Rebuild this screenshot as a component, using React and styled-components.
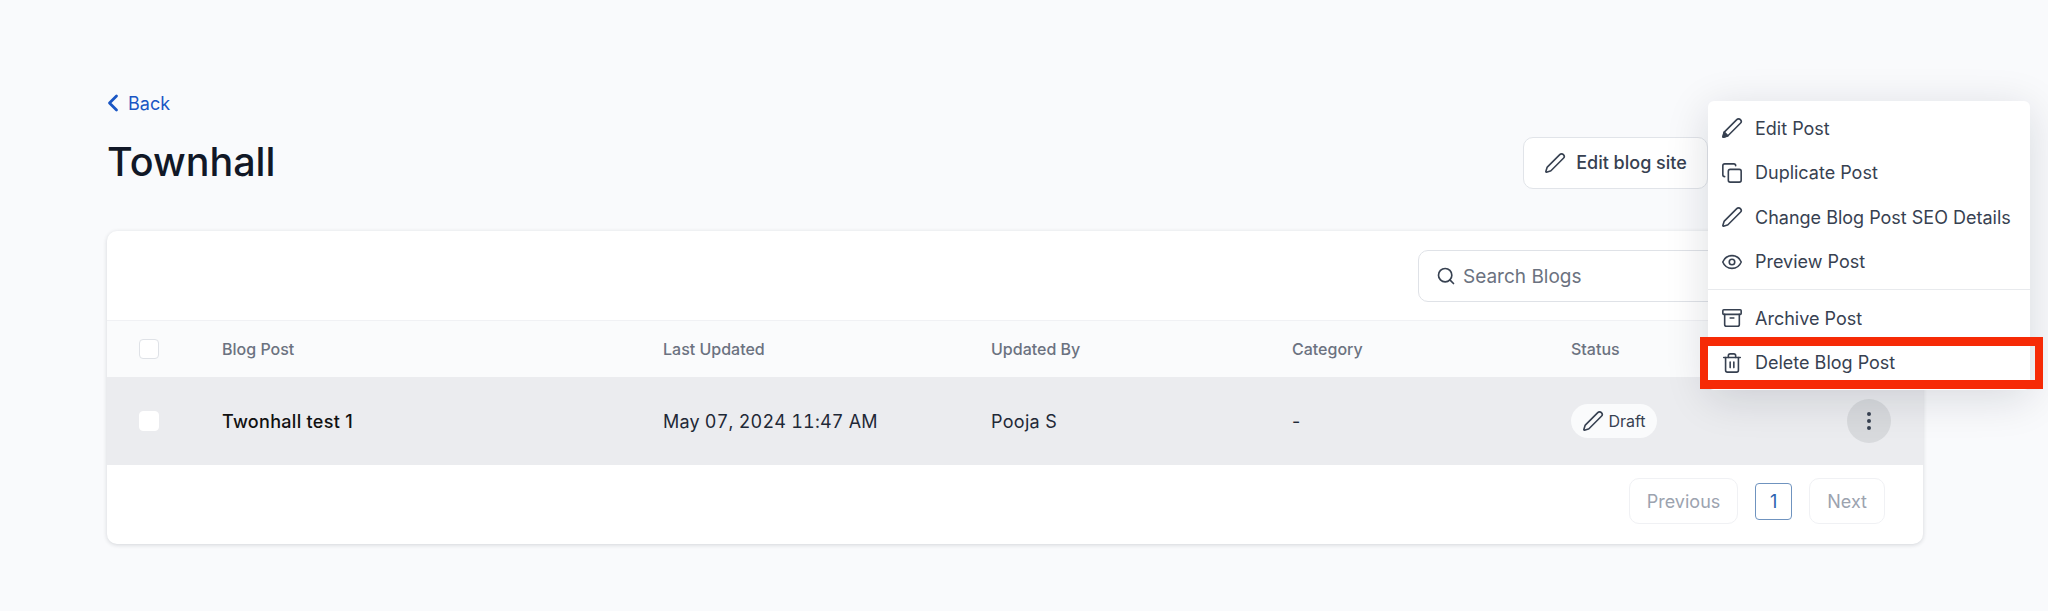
import React from 'react';
import styled, { createGlobalStyle } from 'styled-components';
import { ChevronLeft, Pen, Copy, Eye, Archive, Trash2, Search, EllipsisVertical } from 'lucide-react';

const GlobalStyle = createGlobalStyle`
  html, body {
    margin: 0;
    background: #f9fafc;
    font-family: Inter, "Liberation Sans", sans-serif;
    overflow: hidden;
  }
`;

const Page = styled.div`
  position: relative;
  box-sizing: border-box;
  width: 2048px;
  height: 611px;
  padding: 90px 125px 0 107px;
  background: #f9fafc;
`;

const BackLink = styled.a`
  display: flex;
  align-items: center;
  gap: 1px;
  height: 26px;
  margin-left: -8px;
  font-size: 18px;
  color: #1a56c4;
`;

const HeaderRow = styled.div`
  display: flex;
  justify-content: space-between;
  align-items: center;
  height: 51px;
  margin: 21px 215px 43px 0;
`;

const Title = styled.h1`
  margin: 0 0 2px;
  font-size: 39.5px;
  font-weight: 450;
  color: #111827;
`;

const OutlineButton = styled.button`
  display: flex;
  align-items: center;
  justify-content: center;
  gap: 10px;
  box-sizing: border-box;
  width: 185px;
  height: 52px;
  background: #fff;
  border: 1px solid #e1e4e9;
  border-radius: 10px;
  font: 450 18px Inter, sans-serif;
  color: #374151;
`;

const Card = styled.div`
  background: #fff;
  border-radius: 10px;
  box-shadow: 0 1px 4px rgba(17, 24, 39, 0.16);
  overflow: hidden;
`;

const Toolbar = styled.div`
  display: flex;
  justify-content: flex-end;
  align-items: center;
  box-sizing: border-box;
  height: 90px;
  padding: 1px 32px 0 0;
  border-bottom: 1px solid #f0f1f4;
`;

const SearchBox = styled.div`
  display: flex;
  align-items: center;
  gap: 7px;
  box-sizing: border-box;
  width: 473px;
  height: 52px;
  padding-left: 17px;
  border: 1px solid #dfe2e7;
  border-radius: 10px;
  font-size: 19px;
  color: #6b7280;
`;

const TableRow = styled.div`
  display: grid;
  grid-template-columns: 83px 441px 328px 301px 279px 1fr 44px;
  align-items: center;
  box-sizing: border-box;
  height: ${(p) => (p.$head ? '56px' : '88px')};
  padding: 0 32px;
  background: ${(p) => (p.$head ? '#fafbfc' : '#ebecef')};
  font-size: ${(p) => (p.$head ? '16px' : '18px')};
  font-weight: ${(p) => (p.$head ? 500 : 400)};
  letter-spacing: ${(p) => (p.$head ? '0' : '0.3px')};
  color: ${(p) => (p.$head ? '#6b7280' : '#1f2937')};
`;

const Checkbox = styled.span`
  display: block;
  box-sizing: border-box;
  width: 20px;
  height: 20px;
  background: #fff;
  border: 1px solid ${(p) => (p.$plain ? '#fff' : '#dfe2e7')};
  border-radius: 4px;
`;

const PostName = styled.span`
  font-weight: 500;
  color: #111;
`;

const DateCell = styled.span`
  font-variant-numeric: tabular-nums;
  letter-spacing: 0.2px;
`;

const DraftPill = styled.span`
  display: inline-flex;
  align-items: center;
  justify-content: center;
  gap: 4px;
  box-sizing: border-box;
  width: 86px;
  height: 34px;
  background: #fafbfc;
  border-radius: 17px;
  font-size: 16px;
  letter-spacing: 0;
  color: #374151;
`;

const KebabButton = styled.span`
  display: flex;
  align-items: center;
  justify-content: center;
  width: 44px;
  height: 44px;
  background: #d8dadd;
  border-radius: 50%;
  color: #374151;
`;

const Pagination = styled.div`
  display: flex;
  justify-content: flex-end;
  align-items: center;
  gap: 17px;
  box-sizing: border-box;
  height: 79px;
  padding: 0 38px 7px 0;
`;

const PageButton = styled.span`
  display: flex;
  align-items: center;
  justify-content: center;
  box-sizing: border-box;
  width: ${(p) => (p.$current ? '37px' : 'auto')};
  height: ${(p) => (p.$current ? '37px' : '46px')};
  padding: ${(p) => (p.$current ? '0' : '0 17px')};
  border: 1px solid ${(p) => (p.$current ? '#6f93bf' : '#f0f1f4')};
  border-radius: ${(p) => (p.$current ? '4px' : '10px')};
  font-size: 18px;
  font-weight: 400;
  color: ${(p) => (p.$current ? '#2b62ae' : '#9ca3af')};
`;

const Menu = styled.div`
  position: absolute;
  top: 101px;
  left: 1708px;
  width: 322px;
  box-sizing: border-box;
  padding: 5px 0;
  background: #fff;
  border-radius: 6px;
  box-shadow: 0 8px 44px rgba(17, 24, 39, 0.14);
`;

const MenuItem = styled.div`
  display: flex;
  align-items: center;
  gap: 12px;
  height: 44.5px;
  padding-left: 13px;
  font-size: 18px;
  color: #374151;
`;

const MenuDivider = styled.div`
  margin: 5px 0 6px;
  border-top: 1px solid #e8eaed;
`;

const Highlight = styled.div`
  position: absolute;
  top: 337px;
  left: 1700px;
  box-sizing: border-box;
  width: 343px;
  height: 52px;
  border: solid #f62a06;
  border-width: 9px 8px;
`;

// pen with the solid tip used on the first menu row
const SolidPen = () => (
  <svg width="22" height="22" viewBox="0 0 24 24" fill="none" stroke="currentColor" strokeWidth="1.75" strokeLinecap="round" strokeLinejoin="round">
    <path d="M21.174 6.812a1 1 0 0 0-3.986-3.987L3.842 16.174a2 2 0 0 0-.5.83l-1.321 4.352a.5.5 0 0 0 .623.622l4.353-1.32a2 2 0 0 0 .83-.497z" />
    <path d="M3.5 16.5l4 4-5 1.5z" fill="currentColor" />
  </svg>
);

const menuTop = [
  { label: 'Edit Post', icon: <SolidPen /> },
  { label: 'Duplicate Post', icon: <Copy size={22} strokeWidth={1.75} /> },
  { label: 'Change Blog Post SEO Details', icon: <Pen size={22} strokeWidth={1.75} /> },
  { label: 'Preview Post', icon: <Eye size={22} strokeWidth={1.75} /> },
];

const menuBottom = [
  { label: 'Archive Post', icon: <Archive size={22} strokeWidth={1.75} /> },
  { label: 'Delete Blog Post', icon: <Trash2 size={22} strokeWidth={1.75} /> },
];

const App = () => {
  return (
    <Page>
      <GlobalStyle />
      <BackLink>
        <ChevronLeft size={28} strokeWidth={2.4} />
        Back
      </BackLink>
      <HeaderRow>
        <Title>Townhall</Title>
        <OutlineButton>
          <Pen size={22} strokeWidth={1.75} />
          Edit blog site
        </OutlineButton>
      </HeaderRow>
      <Card>
        <Toolbar>
          <SearchBox>
            <Search size={20} color="#374151" />
            Search Blogs
          </SearchBox>
        </Toolbar>
        <TableRow $head>
          <Checkbox />
          <span>Blog Post</span>
          <span>Last Updated</span>
          <span>Updated By</span>
          <span>Category</span>
          <span>Status</span>
        </TableRow>
        <TableRow>
          <Checkbox $plain />
          <PostName>Twonhall test 1</PostName>
          <DateCell>May 07, 2024 11:47 AM</DateCell>
          <span>Pooja S</span>
          <span>-</span>
          <span>
            <DraftPill>
              <Pen size={22} strokeWidth={1.75} />
              Draft
            </DraftPill>
          </span>
          <KebabButton>
            <EllipsisVertical size={24} />
          </KebabButton>
        </TableRow>
        <Pagination>
          <PageButton>Previous</PageButton>
          <PageButton $current>1</PageButton>
          <PageButton>Next</PageButton>
        </Pagination>
      </Card>
      <Menu>
        {menuTop.map((item) => (
          <MenuItem key={item.label}>
            {item.icon}
            {item.label}
          </MenuItem>
        ))}
        <MenuDivider />
        {menuBottom.map((item) => (
          <MenuItem key={item.label}>
            {item.icon}
            {item.label}
          </MenuItem>
        ))}
      </Menu>
      <Highlight />
    </Page>
  );
};

export default App;
